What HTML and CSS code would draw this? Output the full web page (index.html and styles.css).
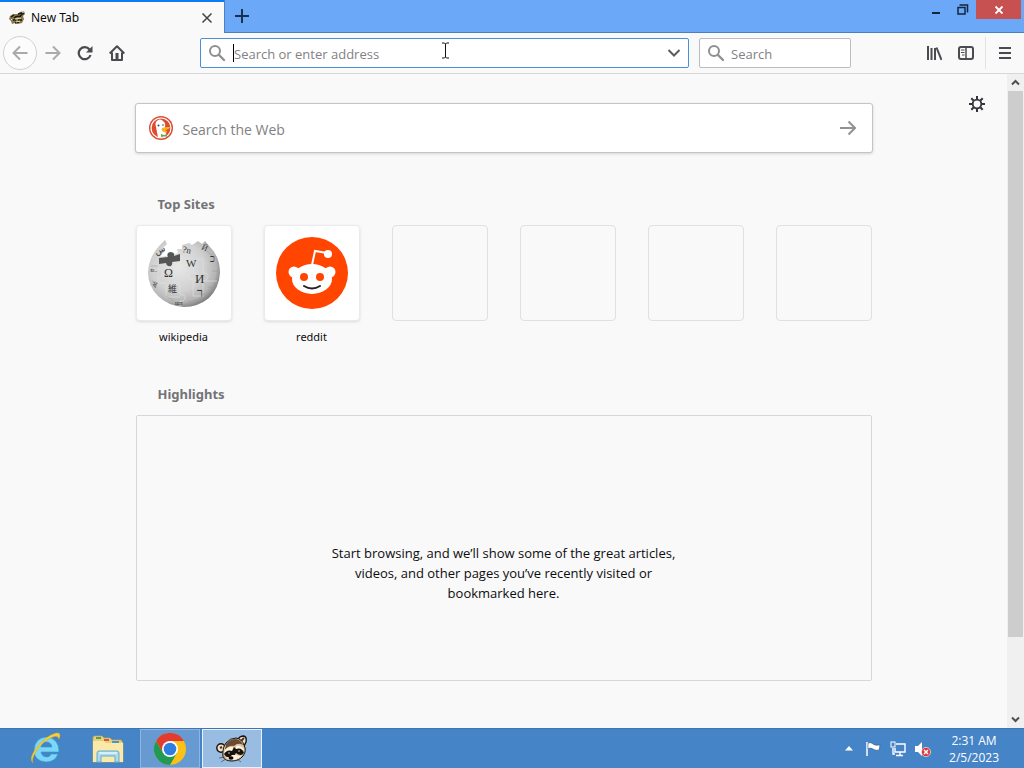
FILE: index.html
```html
<!DOCTYPE html>
<html lang="en">
<head>
    <meta charset="UTF-8">
    <meta name="viewport" content="width=device-width, initial-scale=1.0">
    <title>New Tab</title>
    <link rel="stylesheet" href="styles.css">
</head>
<body>

<svg class="defs" width="0" height="0" aria-hidden="true">
    <symbol id="magnifier" viewBox="0 0 18 18">
        <circle cx="7" cy="7" r="5" fill="none" stroke="#8f8f93" stroke-width="2"/>
        <path d="M11 11L16 16" stroke="#8f8f93" stroke-width="2.4" stroke-linecap="round"/>
    </symbol>
</svg>

<header class="titlebar">
    <div class="tab">
        <svg class="tab-icon" width="16" height="16" viewBox="0 0 16 16">
            <path d="M1 6L4 4L9 4L11 2L15 1L16 4L14 6L15 9L13 13L9 14L6 13L3 14L2 11L0 9Z" fill="#8a7a4c"/>
            <path d="M2 7L5 5M9 4L13 3M11 6L15 3M5 8Q8 5 12 7M4 10H7M9 10H13M6 13L10 12" fill="none" stroke="#1d1a12" stroke-width="1.500"/>
            <path d="M6 9L12 8M7 12L11 11M13 2L15 2M2 9L3 10" stroke="#ece1b8"/>
        </svg>
        <span class="tab-title">New Tab</span>
        <button class="icon-button tab-close" aria-label="Close tab">
            <svg width="12" height="12" viewBox="0 0 12 12"><path d="M1.500 1.500L10.500 10.500M10.500 1.500L1.500 10.500" stroke="#444" stroke-width="1.500"/></svg>
        </button>
    </div>
    <button class="icon-button new-tab" aria-label="New tab">
        <svg width="14" height="14" viewBox="0 0 14 14"><path d="M7 0V14M0 7H14" stroke="#16324f" stroke-width="2"/></svg>
    </button>
    <div class="window-controls">
        <button class="icon-button window-button" aria-label="Minimize">
            <svg width="12" height="12" viewBox="0 0 12 12"><path d="M2 9H10" stroke="#12263d" stroke-width="2"/></svg>
        </button>
        <button class="icon-button window-button" aria-label="Restore">
            <svg width="12" height="12" viewBox="0 0 12 12"><path d="M1 3.500H8V10H1ZM2.500 1H10.500V8.500" fill="none" stroke="#12263d" stroke-width="1.500"/></svg>
        </button>
        <button class="icon-button window-close" aria-label="Close">
            <svg width="10" height="10" viewBox="0 0 10 10"><path d="M1.500 1.500L8.500 8.500M8.500 1.500L1.500 8.500" stroke="#fff" stroke-width="1.800"/></svg>
        </button>
    </div>
</header>

<nav class="toolbar">
    <button class="icon-button back" aria-label="Back">
        <svg width="16" height="16" viewBox="0 0 16 16"><path d="M15.500 8H1.500M8 1.500L1.500 8L8 14.500" fill="none" stroke="#aaa" stroke-width="2"/></svg>
    </button>
    <button class="icon-button tool" aria-label="Forward">
        <svg width="16" height="16" viewBox="0 0 16 16"><path d="M0.500 8H14.500M8 1.500L14.500 8L8 14.500" fill="none" stroke="#aaa" stroke-width="2"/></svg>
    </button>
    <button class="icon-button tool" aria-label="Reload">
        <svg width="16" height="16" viewBox="0 0 16 16"><path d="M12.500 4.500A6 6 0 1 0 13.500 10" fill="none" stroke="#4a4a4f" stroke-width="2.200"/><path d="M15.500 1V7.500H9Z" fill="#4a4a4f"/></svg>
    </button>
    <button class="icon-button tool" aria-label="Home">
        <svg width="16" height="16" viewBox="0 0 16 16"><path d="M0.700 8.500L8 1.300L15.300 8.500M3 7.500V15H13V7.500" fill="none" stroke="#4a4a4f" stroke-width="2" stroke-linejoin="round"/><path d="M6.500 8H9.500V14H6.500Z" fill="#4a4a4f"/></svg>
    </button>
    <div class="spacer"></div>
    <div class="field url-field">
        <svg width="18" height="18"><use href="#magnifier"/></svg>
        <span class="caret"></span>
        <input type="text" aria-label="Address" placeholder="Search or enter address">
        <button class="icon-button" aria-label="Show history">
            <svg width="14" height="14" viewBox="0 0 14 14"><path d="M1.500 4L7 9.500L12.500 4" fill="none" stroke="#5c5c60" stroke-width="2"/></svg>
        </button>
        <svg class="pointer" width="9" height="17" viewBox="0 0 9 17"><path d="M1 1H3.500L4.500 2L5.500 1H8M4.500 2V15M1 16H3.500L4.500 15L5.500 16H8" fill="none" stroke="#111"/></svg>
    </div>
    <div class="field search-field">
        <svg width="18" height="18"><use href="#magnifier"/></svg>
        <input type="text" aria-label="Search" placeholder="Search">
    </div>
    <div class="spacer"></div>
    <button class="icon-button tool" aria-label="Library">
        <svg width="16" height="16" viewBox="0 0 16 16"><path d="M2 1V15M5.500 3V15M9 3V15M10.500 2.500L15.500 15" stroke="#4a4a4f" stroke-width="2"/></svg>
    </button>
    <button class="icon-button tool" aria-label="Sidebars">
        <svg width="16" height="16" viewBox="0 0 16 16"><rect x="1" y="2" width="14" height="12" rx="2" fill="none" stroke="#4a4a4f" stroke-width="2"/><path d="M8 2V14" stroke="#4a4a4f" stroke-width="1.500"/><path d="M3 5H6.500M3 7.500H6.500M4 10H6.500" stroke="#4a4a4f"/></svg>
    </button>
    <div class="separator"></div>
    <button class="icon-button tool" aria-label="Menu">
        <svg width="14" height="14" viewBox="0 0 14 14"><path d="M1 2H13M1 7H13M1 12H13" stroke="#4a4a4f" stroke-width="2"/></svg>
    </button>
</nav>

<div class="viewport">
    <main class="page">
        <button class="icon-button settings" aria-label="Settings">
            <svg width="16" height="16" viewBox="0 0 16 16"><circle cx="8" cy="8" r="4.300" fill="none" stroke="#333338" stroke-width="1.800"/><path d="M8 0V3M8 13V16M0 8H3M13 8H16M2.300 2.300L4.500 4.500M11.500 11.500L13.700 13.700M13.700 2.300L11.500 4.500M4.500 11.500L2.300 13.700" stroke="#333338" stroke-width="2"/></svg>
        </button>

        <div class="web-search">
            <svg width="24" height="24" viewBox="0 0 24 24">
                <circle cx="12" cy="12" r="12" fill="#de4b30"/>
                <circle cx="12" cy="12" r="10" fill="none" stroke="#fff" stroke-width="1.200"/>
                <path d="M9 21.500L7 11Q5.500 6 8.500 4.500Q11 2.500 14 5Q17 7 16 11L16 15L18 20Q14 22.500 9 21.500Z" fill="#fff"/>
                <path d="M13 12Q17 10.500 21 11Q21 13 16 14Q19 15 18 16.500Q14 16.500 12.500 14Z" fill="#f9b51c"/>
                <path d="M12 18L15 19L18 18V20.500L15 20.500L12 21Z" fill="#69a84f"/>
                <circle cx="9.500" cy="9.500" r="1" fill="#29496c"/><circle cx="14" cy="9" r="0.800" fill="#29496c"/>
            </svg>
            <input type="text" aria-label="Search the Web" placeholder="Search the Web">
            <button class="icon-button" aria-label="Search">
                <svg width="16" height="16" viewBox="0 0 16 16"><path d="M0 8H15M8.500 1.500L15 8L8.500 14.500" fill="none" stroke="#929296" stroke-width="2"/></svg>
            </button>
        </div>

        <section class="top-sites">
            <h2>Top Sites</h2>
            <div class="tiles">
                <a class="site" href="#">
                    <span class="tile">
                        <svg width="76" height="76" viewBox="0 0 76 76">
                            <defs>
                                <radialGradient id="globe" cx="42%" cy="40%" r="62%">
                                    <stop offset="0" stop-color="#e8e8e8"/>
                                    <stop offset="0.600" stop-color="#d0d0d0"/>
                                    <stop offset="0.850" stop-color="#b4b4b4"/>
                                    <stop offset="1" stop-color="#808080"/>
                                </radialGradient>
                            </defs>
                            <path d="M13 11L19 5L21 9L17 13L18 17L14 22L25 20L32 18L31 14L36 14L36 10L43 8L46 10L52 6L56 9L59 6L64 12Q74 22 74 38Q73 53 63 63Q52 72 38 72Q22 71 12 61Q2 51 2 37Q3 22 13 11Z" fill="url(#globe)"/>
                            <path d="M13 23L22 22Q20 18 24 17Q29 17 28 21L34 19V26L26 27Q27 29 25 31Q21 32 20 28L13 29Z" fill="#555"/>
                            <path d="M12 29V35Q17 34 17 38T12 42V48H20Q20 52 24 52T27 48H34M28 28V33Q34 32 34 36T28 39V48M34 25H43Q43 30 47 29T50 24H57M47 30V38Q51 37 52 41T47 46V61M34 48V60Q40 59 39 63T34 66V71M34 40H43Q42 45 47 44M57 25V38Q63 38 62 42T57 46V58M57 46H71M20 51V62H34M47 61H58" fill="none" stroke="#e2e2e2" stroke-width="0.600"/>
                            <path d="M60 16L68 22M66 36H72M62 52L68 53M5 31H12M6 46L12 48M20 61L28 66M42 67L51 65" stroke="#999" stroke-width="0.500"/>
                            <g class="glyphs">
                                <text x="18" y="42" font-size="12">Ω</text>
                                <text x="40" y="32" font-size="11">W</text>
                                <text x="49" y="48" font-size="13">И</text>
                                <text x="22" y="57" font-size="9">維</text>
                                <text x="51" y="62" font-size="12">ר</text>
                                <text x="10" y="20" font-size="9" transform="rotate(-25 10 20)">س</text>
                                <text x="36" y="17" font-size="9" transform="rotate(12 36 17)">?n</text>
                                <text x="55" y="14" font-size="8" transform="rotate(25 55 14)">Й</text>
                                <text x="64" y="27" font-size="10">כ</text>
                                <text x="4" y="37" font-size="8">உ</text>
                                <text x="6" y="52" font-size="8" transform="rotate(15 6 52)">ষ</text>
                                <text x="29" y="70" font-size="6">шπ</text>
                            </g>
                        </svg>
                    </span>
                    wikipedia
                </a>
                <a class="site" href="#">
                    <span class="tile">
                        <svg width="72" height="72" viewBox="0 0 72 72">
                            <circle cx="36" cy="36" r="36" fill="#ff4500"/>
                            <path d="M36 28L39 14L51 16" fill="none" stroke="#fff" stroke-width="2"/>
                            <circle cx="52" cy="17" r="4" fill="#fff"/>
                            <circle cx="18" cy="35" r="5.500" fill="#fff"/>
                            <circle cx="54" cy="35" r="5.500" fill="#fff"/>
                            <ellipse cx="36" cy="42" rx="20" ry="15" fill="#fff"/>
                            <circle cx="28" cy="40" r="4" fill="#ff4500"/>
                            <circle cx="44" cy="40" r="4" fill="#ff4500"/>
                            <path d="M28 49Q36 54 44 49" fill="none" stroke="#222" stroke-width="2" stroke-linecap="round"/>
                        </svg>
                    </span>
                    reddit
                </a>
                <div class="tile empty"></div>
                <div class="tile empty"></div>
                <div class="tile empty"></div>
                <div class="tile empty"></div>
            </div>
        </section>

        <section class="highlights">
            <h2>Highlights</h2>
            <div class="empty-state">
                <p>Start browsing, and we’ll show some of the great articles, videos, and other pages you’ve recently visited or bookmarked here.</p>
            </div>
        </section>
    </main>

    <div class="scrollbar">
        <button class="icon-button" aria-label="Scroll up">
            <svg width="9" height="7" viewBox="0 0 9 7"><path d="M1 5.500L4.500 2L8 5.500" fill="none" stroke="#505050" stroke-width="2"/></svg>
        </button>
        <div class="track"><div class="thumb"></div></div>
        <button class="icon-button" aria-label="Scroll down">
            <svg width="9" height="7" viewBox="0 0 9 7"><path d="M1 1.500L4.500 5L8 1.500" fill="none" stroke="#505050" stroke-width="2"/></svg>
        </button>
    </div>
</div>

<footer class="taskbar">
    <button class="task" aria-label="Internet Explorer">
        <svg width="34" height="34" viewBox="0 0 34 34">
            <path fill-rule="evenodd" d="M29 22Q26 30 17 30Q5 29 5 18Q6 6 17 5Q30 6 30 20H12Q13 25 18 25Q21 25 22 22ZM12 15H23Q22 10 17 10Q13 10 12 15Z" fill="#7bd6f7" stroke="#2c9ad2" stroke-width="0.600"/>
            <path d="M4 31Q-1 27 8 15Q18 3 27 1Q33 0 30 7Q29 3 24 5Q15 8 8 18Q2 27 4 31Z" fill="#f5cf3c" stroke="#d7a51c" stroke-width="0.500"/>
        </svg>
    </button>
    <button class="task" aria-label="File Explorer">
        <svg width="34" height="30" viewBox="0 0 34 30">
            <path d="M2 4Q2 2 4 2H11L13 4H19L21 6H30L32 9V28H2Z" fill="#edce78" stroke="#c4a557" stroke-width="0.700"/>
            <path d="M5 3H10V5H5Z" fill="#54a05f"/><path d="M13 5H18V7H13Z" fill="#d65a3e"/><path d="M21 7H28V9H21Z" fill="#4796d1"/>
            <path d="M2 7H13L15 9H32V28H2Z" fill="#fae9a8"/>
            <path d="M6 28V19Q6 17 8 17H26Q28 17 28 19V28H24V22H10V28Z" fill="#a9daf0" stroke="#67acd0" stroke-width="1"/>
            <path d="M8 19H26" stroke="#e4f7fc" stroke-width="1.500"/>
        </svg>
    </button>
    <button class="task running" aria-label="Chrome">
        <svg width="32" height="32" viewBox="0 0 32 32">
            <circle cx="16" cy="16" r="16" fill="#fbc116"/>
            <path d="M2.100 8A16 16 0 0 1 29.900 8H16L9.100 20Z" fill="#e33b2e"/>
            <path d="M2.100 8A16 16 0 0 0 16 32L22.900 20L9.100 20Z" fill="#229954"/>
            <circle cx="16" cy="16" r="8" fill="#fff"/><circle cx="16" cy="16" r="6.300" fill="#2f7de1"/>
        </svg>
    </button>
    <button class="task running active" aria-label="New Tab">
        <svg width="32" height="28" viewBox="0 0 32 28">
            <circle cx="5" cy="13" r="4.200" fill="#f1e2c6" stroke="#17120e" stroke-width="1.400"/>
            <path d="M22 5Q23 1 28 1Q31 2 30 7L28 11Z" fill="#f1e2c6" stroke="#17120e" stroke-width="1.400"/>
            <path d="M4 13L6 12" stroke="#4e3526" stroke-width="2"/>
            <path d="M25 6L28 3" stroke="#4e3526" stroke-width="2"/>
            <path d="M7 22Q6 13 10 8Q14 3 20 3Q26 4 28 10Q31 16 27 21Q23 26 16 26Q9 26 7 22Z" fill="#dcc4a0" stroke="#17120e"/>
            <path d="M10 9Q14 4 20 4Q25 5 27 10Q22 7 18 11Q13 10 9 15Z" fill="#694a36"/>
            <path d="M9 15Q13 10 18 13L17 16Q12 14 8 19ZM20 11Q24 9 28 14L27 16Q24 13 20 14Z" fill="#fff5df"/>
            <path d="M8 19Q11 14 16 16L18 12L20 14Q26 12 28 18Q25 22 20 18L17 22Q11 24 8 19Z" fill="#17120e"/>
            <path d="M10 22Q14 23 16 20L20 20Q23 21 25 21Q22 25 16 25Q12 25 10 22Z" fill="#fff0d8"/>
            <ellipse cx="15" cy="23" rx="2.500" ry="1.800" fill="#080706"/>
            <circle cx="13" cy="18" r="0.700" fill="#fff"/><circle cx="23" cy="16" r="0.700" fill="#fff"/>
            <path d="M9 22L3 23M10 24L5 27M21 24L25 27" stroke="#53453c" stroke-width="0.700"/>
        </svg>
    </button>
    <div class="tray">
        <svg width="8" height="5" viewBox="0 0 8 5"><path d="M0 4.500L4 0L8 4.500Z" fill="#fff"/></svg>
        <svg width="16" height="16" viewBox="0 0 16 16"><path d="M2 1V15" stroke="#fff" stroke-width="1.500"/><path d="M3 2Q6 1 8 3T15 4L14 9Q11 10 8 8T3 8Z" fill="#fff" stroke="#254d79" stroke-width="0.500"/></svg>
        <svg width="16" height="16" viewBox="0 0 16 16"><path d="M6 3H15V11H5V7M10 11V14M6 14.500H13M3 7V13H5" fill="none" stroke="#fff" stroke-width="1.400"/><rect x="1" y="1" width="4" height="5" fill="#4584c6" stroke="#fff"/></svg>
        <svg width="16" height="16" viewBox="0 0 16 16"><path d="M0 5H3L7 1V15L3 11H0Z" fill="#fff"/><circle cx="11" cy="11" r="4.600" fill="#d93a36" stroke="#fff" stroke-width="0.600"/><path d="M9 9L13 13M13 9L9 13" stroke="#fff" stroke-width="1.500"/></svg>
    </div>
    <div class="clock"><span>2:31 AM</span><span>2/5/2023</span></div>
</footer>

</body>
</html>
```

FILE: styles.css
```css
* {
    box-sizing: border-box;
}

body {
    display: flex;
    flex-direction: column;
    height: 100vh;
    margin: 0;
    overflow: hidden;
    font-family: "Noto Sans", "Open Sans", sans-serif;
    font-size: 12px;
    color: #0c0c0d;
    background-color: #f9f9fa;
}

svg {
    display: block;
    flex: none;
}

.defs {
    position: absolute;
}

.icon-button {
    display: flex;
    align-items: center;
    justify-content: center;
    flex: none;
    padding: 0;
    border: none;
    background: none;
}

input {
    flex: 1;
    min-width: 0;
    padding: 2px 0 0;
    border: none;
    outline: none;
    background: none;
    font-family: "Open Sans", "Noto Sans", sans-serif;
    font-size: 13px;
}

input::placeholder {
    color: #818184;
    opacity: 1;
}

/* tabs */
.titlebar {
    display: flex;
    flex: none;
    height: 33px;
    background-color: #6ba8f8;
    border-bottom: 1px solid #4a7fc0;
}

.tab {
    display: flex;
    align-items: center;
    width: 224px;
    height: 33px;
    padding: 0 9px;
    border-top: 2px solid #0a7cf5;
    background-color: #f9f9fa;
}

.tab-title {
    flex: 1;
    margin-left: 6px;
}

.tab-close {
    width: 16px;
    height: 16px;
}

.new-tab {
    width: 34px;
    border-left: 1px solid #4a7fc0;
}

.window-controls {
    display: flex;
    margin-left: auto;
    margin-right: 3px;
}

.window-button {
    width: 27px;
    height: 19px;
}

.window-close {
    width: 45px;
    height: 19px;
    background-color: #c75050;
}

/* toolbar */
.toolbar {
    display: flex;
    align-items: center;
    flex: none;
    height: 41px;
    padding: 0 3px;
    background-color: #f9f9fa;
    border-bottom: 1px solid #d8d8da;
}

.back {
    width: 34px;
    height: 34px;
    border: 1px solid #d0d0d2;
    border-radius: 50%;
    background-color: #fcfcfc;
}

.tool {
    width: 32px;
    height: 32px;
}

.spacer {
    flex: 0 0 67px;
}

.field {
    display: flex;
    align-items: center;
    height: 30px;
    padding: 0 7px;
    border: 1px solid #bcbcbe;
    border-radius: 2px;
    background-color: #fff;
}

.url-field {
    position: relative;
    flex: 1;
    border-color: #4a90d9;
}

.caret {
    width: 1px;
    height: 18px;
    margin-left: 7px;
    background-color: #000;
}

.pointer {
    position: absolute;
    top: 3px;
    left: 240px;
}

.search-field {
    width: 152px;
    margin-left: 10px;
}

.search-field input {
    margin-left: 6px;
}

.separator {
    width: 1px;
    height: 32px;
    margin: 0 3px;
    background-color: #e2e2e4;
}

/* new tab page */
.viewport {
    display: flex;
    flex: 1;
    min-height: 0;
}

.page {
    position: relative;
    flex: 1;
    padding-top: 29px;
}

.settings {
    position: absolute;
    top: 22px;
    right: 22px;
}

.web-search {
    display: flex;
    align-items: center;
    width: 738px;
    max-width: 100%;
    height: 50px;
    margin: 0 auto;
    padding: 0 16px 0 13px;
    border: 1px solid #c4c4c6;
    border-radius: 3px;
    background-color: #fff;
    box-shadow: 0 1px 3px rgba(0, 0, 0, 0.15);
}

.web-search input {
    margin-left: 10px;
    font-size: 14px;
}

section {
    width: 736px;
    max-width: 100%;
    margin: 0 auto;
}

h2 {
    margin: 0 0 11px;
    padding-left: 22px;
    font-size: 13px;
    font-weight: bold;
    line-height: 20px;
    color: #737376;
}

.top-sites {
    margin-top: 41px;
}

.tiles {
    display: grid;
    grid-template-columns: repeat(6, 96px);
    justify-content: space-between;
}

.site {
    font-size: 11px;
    line-height: 16px;
    text-align: center;
    text-decoration: none;
    color: #0c0c0d;
}

.tile {
    display: flex;
    align-items: center;
    justify-content: center;
    height: 96px;
    margin-bottom: 8px;
    border: 1px solid #ebebed;
    border-radius: 4px;
    background-color: #fff;
    box-shadow: 0 1px 3px rgba(0, 0, 0, 0.12);
}

.empty {
    border-color: #e0e0e2;
    background: none;
    box-shadow: none;
}

.glyphs {
    font-family: "Liberation Serif", "DejaVu Sans", "Noto Sans CJK JP", serif;
    fill: #333;
}

.highlights {
    margin-top: 39px;
}

.empty-state {
    display: flex;
    justify-content: center;
    align-items: flex-end;
    height: 266px;
    padding-bottom: 77px;
    border: 1px solid #d7d7db;
    border-radius: 2px;
}

.empty-state p {
    max-width: 350px;
    margin: 0;
    font-family: "Open Sans", "Noto Sans", sans-serif;
    font-size: 13px;
    line-height: 20px;
    text-align: center;
}

.scrollbar {
    display: flex;
    flex-direction: column;
    width: 17px;
    background-color: #f0f0f0;
}

.scrollbar .icon-button {
    height: 17px;
}

.track {
    flex: 1;
    padding: 0 1px;
}

.thumb {
    height: 88%;
    background-color: #cdcdcd;
}

/* taskbar */
.taskbar {
    display: flex;
    align-items: center;
    flex: none;
    gap: 2px;
    height: 40px;
    padding: 0 25px 0 16px;
    border-top: 1px solid #3f75b0;
    background-color: #4584c6;
    color: #fff;
}

.task {
    display: flex;
    align-items: center;
    justify-content: center;
    width: 60px;
    height: 39px;
    padding: 0;
    border: 1px solid transparent;
    background: none;
}

.running {
    border-color: #8fb4df;
    background-color: #669ad0;
}

.active {
    border-color: #e8f1fb;
    background-color: #98bce2;
}

.tray {
    display: flex;
    align-items: center;
    gap: 9px;
    margin-left: auto;
    margin-right: 16px;
}

.tray svg:first-child {
    margin-right: 3px;
}

.clock {
    display: flex;
    flex-direction: column;
    align-items: center;
    font-family: "Open Sans", "Noto Sans", sans-serif;
    line-height: 17px;
}
```
